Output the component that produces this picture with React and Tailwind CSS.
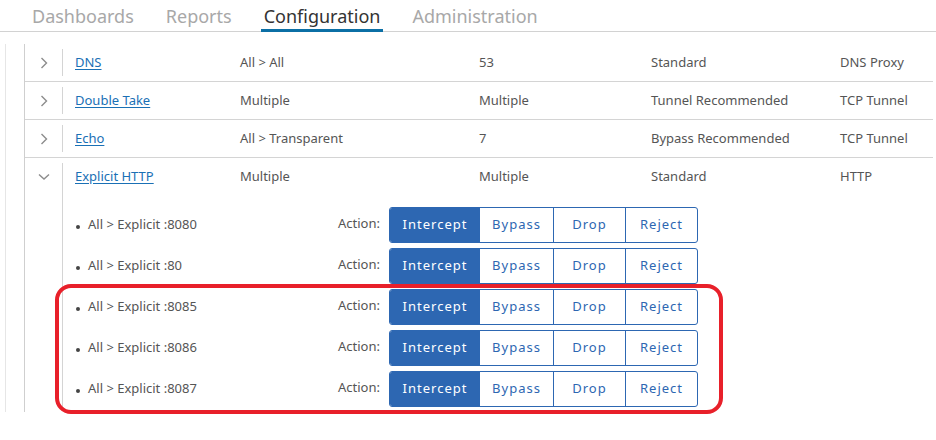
import React from 'react';

const rows = [
  { name: 'DNS', source: 'All > All', port: '53', mode: 'Standard', proxy: 'DNS Proxy' },
  { name: 'Double Take', source: 'Multiple', port: 'Multiple', mode: 'Tunnel Recommended', proxy: 'TCP Tunnel' },
  { name: 'Echo', source: 'All > Transparent', port: '7', mode: 'Bypass Recommended', proxy: 'TCP Tunnel' },
];

const listeners = ['8080', '80', '8085', '8086', '8087'];

function Chevron({ open }) {
  if (open) {
    return (
      <svg width="12" height="8" viewBox="0 0 12 8" className="mt-[1px]">
        <polyline points="1,1.5 6,6 11,1.5" fill="none" stroke="#8c8c8c" strokeWidth="1.4" />
      </svg>
    );
  }
  return (
    <svg width="8" height="12" viewBox="0 0 8 12">
      <polyline points="1.5,1 6.5,6 1.5,11" fill="none" stroke="#8c8c8c" strokeWidth="1.4" />
    </svg>
  );
}

function Cells({ row }) {
  return (
    <>
      <div className="pl-[12px]">
        <a href="#" className="text-[#1a70b5] underline underline-offset-2">{row.name}</a>
      </div>
      <div>{row.source}</div>
      <div>{row.port}</div>
      <div>{row.mode}</div>
      <div>{row.proxy}</div>
    </>
  );
}

function ActionGroup() {
  return (
    <div className="flex shrink-0 w-[309px] h-[36px] border border-[#2d67b2] rounded-[3px] overflow-hidden text-[13px] tracking-[1px] text-[#2d67b2]">
      <button className="w-[90px] bg-[#2d67b2] text-white">Intercept</button>
      <button className="w-[74px] border-r border-[#2d67b2]">Bypass</button>
      <button className="w-[72px] border-r border-[#2d67b2]">Drop</button>
      <button className="w-[71px]">Reject</button>
    </div>
  );
}

export default function App() {
  const tabs = ['Dashboards', 'Reports', 'Configuration', 'Administration'];

  return (
    <div className="relative w-[936px] h-[440px] bg-white overflow-hidden font-['Noto_Sans',sans-serif] text-[13px] text-[#555]">
      {/* top navigation */}
      <nav className="flex h-[32px] border-b border-[#d2d2d2] pl-[32px] gap-[32px]">
        {tabs.map((t) =>
          t === 'Configuration' ? (
            <div key={t} className="h-[32px] -mx-[3px] px-[3px] pt-[4px] leading-[24px] text-[18px] text-[#333] border-b-[3px] border-[#0b6fa5]">
              {t}
            </div>
          ) : (
            <div key={t} className="h-[32px] pt-[4px] leading-[24px] text-[18px] text-[#a8a8a8]">
              {t}
            </div>
          )
        )}
      </nav>

      {/* services table */}
      <div className="mt-[12px] ml-[5px] h-[368px] border-l border-[#e6e6e6] pl-[18px]">
        <div className="w-[909px] h-full border-l border-[#cfcfcf]">
          {rows.map((row) => (
            <div key={row.name} className="grid grid-cols-[38px_177px_239px_172px_189px_1fr] h-[38px] items-center border-b border-[#d4d4d4]">
              <div className="flex h-full items-center">
                <div className="flex-1 flex justify-center">
                  <Chevron />
                </div>
                <div className="h-[27px] mt-[-1px] border-r border-[#d4d4d4]" />
              </div>
              <Cells row={row} />
            </div>
          ))}

          <div className="flex">
            <div className="w-[38px] flex flex-col">
              <div className="h-[37px] flex items-center">
                <div className="flex-1 flex justify-center">
                  <Chevron open />
                </div>
              </div>
            </div>
            <div className="flex-1 border-l border-[#d4d4d4] mt-[5px] -ml-[1px]">
              <div className="grid grid-cols-[177px_239px_172px_189px_1fr] h-[37px] -mt-[5px] items-center">
                <Cells row={{ name: 'Explicit HTTP', source: 'Multiple', port: 'Multiple', mode: 'Standard', proxy: 'HTTP' }} />
              </div>
              <ul className="pt-[12px] flex flex-col gap-[5px]">
                {listeners.map((p) => (
                  <li key={p} className="flex items-center h-[36px] pl-[13px]">
                    <span className="w-[4px] h-[4px] rounded-full bg-[#444] mt-[4px]" />
                    <span className="ml-[8px] w-[250px]">All &gt; Explicit :{p}</span>
                    <span className="w-[51px] -mt-[3px]">Action:</span>
                    <ActionGroup />
                  </li>
                ))}
              </ul>
            </div>
          </div>
        </div>
      </div>

      {/* highlight annotation */}
      <div className="absolute left-[55px] top-[284px] w-[668px] h-[130px] border-[4px] border-[#e8202a] rounded-[16px] pointer-events-none" />
    </div>
  );
}
